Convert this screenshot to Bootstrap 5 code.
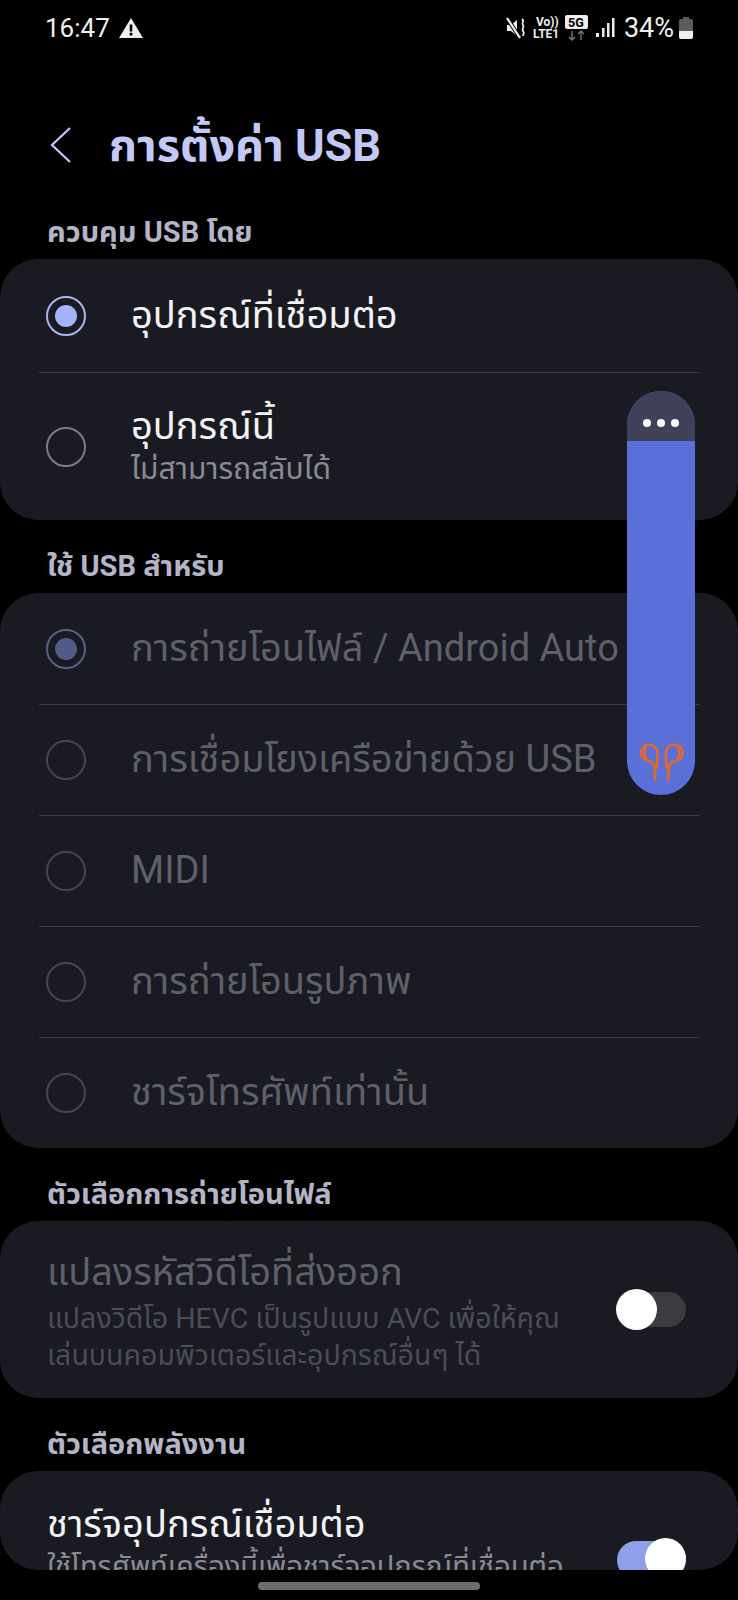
<!DOCTYPE html>
<html lang="th">
<head>
    <meta charset="UTF-8">
    <meta name="viewport" content="width=device-width, initial-scale=1.0">
    <title>การตั้งค่า USB</title>
    <link href="https://cdn.jsdelivr.net/npm/bootstrap@5.3.0/dist/css/bootstrap.min.css" rel="stylesheet">
    <style>
        html, body { background: #000; }
        body { font-family: Roboto, "Noto Sans", "Noto Sans Thai", sans-serif; color: #f2f2f4; }
        .screen { width: 738px; height: 1600px; overflow: hidden; position: relative; background: #000; }

        .status-row { height: 56px; padding: 0 44px 0 45px; font-size: 26px; color: #f0f0f0; }
        .status-pct { font-size: 27px; margin-left: 9px; }
        .status-gap { margin-left: 6px; }
        .app-bar { height: 154px; padding: 24px 0 0 48px; }
        .app-title { font-size: 45px; font-weight: 700; color: #c3c9f6; margin: 0 0 0 37px; line-height: 1; }

        .sec-label { height: 73px; padding: 0 47px 12px; font-size: 29px; font-weight: 700; color: #b4b5c6; line-height: 1; }
        .sec-first { height: 49px; }

        .panel-box { background: #191a22; border-radius: 38px; overflow: hidden; }
        .opt-row { height: 111px; }
        .opt-row + .opt-row { border-top: 1px solid #3b3c45; }
        .opt-tall { height: 148px; }
        .opt-first { height: 113px; }
        .opt-title { font-size: 38px; line-height: 1.1; color: #f3f3f5; }
        .opt-sub { font-size: 30px; line-height: 1.2; margin-top: 4px; color: #8a8b92; }
        .opt-dim .opt-title { color: #5f6068; }

        .rule-list { margin: 0 38px 0 39px; }
        .rule-list .opt-row { padding-left: 7px; }

        .radio-dot { width: 40px; height: 40px; border-radius: 50%; border: 2px solid #7c7d84; margin-right: 45px; flex: none; }
        .radio-dot.is-on { border-color: #aab5f0; }
        .radio-dot.is-on::after { content: ""; width: 22px; height: 22px; border-radius: 50%; background: #a4b3fc; }
        .opt-dim .radio-dot { border-color: #45464e; }
        .opt-dim .radio-dot.is-on { border-color: #5a6084; }
        .opt-dim .radio-dot.is-on::after { background: #525a88; }

        .toggle-box { height: 177px; padding: 0 52px 0 47px; }
        .toggle-text { padding-top: 7px; }
        .toggle-title { font-size: 38px; line-height: 1.1; color: #5f6068; }
        .toggle-sub { font-size: 28.5px; line-height: 37px; margin-top: 7px; color: #4c4d55; }
        .power-box { height: 99px; padding: 33px 52px 0 47px; }
        .power-box .toggle-title { color: #f3f3f5; }
        .power-box .toggle-sub { font-size: 29px; margin-top: 2px; color: #8a8b92; white-space: nowrap; }

        .switch-off { width: 69px; height: 35px; border-radius: 18px; background: #3b3c40; position: relative; flex: none; }
        .switch-off::after { content: ""; position: absolute; left: -1px; top: -3px; width: 41px; height: 41px; border-radius: 50%; background: #fff; }
        .switch-on { width: 69px; height: 38px; border-radius: 19px; background: #8f9fe9; position: absolute; right: 52px; top: 70px; }
        .switch-on::after { content: ""; position: absolute; right: 0; top: -3px; width: 41px; height: 41px; border-radius: 50%; background: #fff; }

        .edge-panel { position: absolute; left: 627px; top: 391px; width: 68px; height: 404px; border-radius: 34px; overflow: hidden; background: #5a70d8; }
        .edge-head { height: 50px; background: #3f4059; gap: 6px; padding-top: 28px; }
        .edge-head i { width: 8px; height: 8px; border-radius: 50%; background: #fff; }
        .edge-buds { position: absolute; left: 12px; top: 351px; }

        .home-pill { position: absolute; left: 258px; top: 1582px; width: 222px; height: 8px; border-radius: 4px; background: #6c6c6e; }
    </style>
</head>
<body>
    <div class="screen">
        <div class="status-row d-flex align-items-center justify-content-between">
            <div class="d-flex align-items-center gap-2">
                <span>16:47</span>
                <svg width="26" height="22" viewBox="0 0 26 22"><path d="M13 1 25 21H1Z" fill="#f0f0f0"/><path d="M11.7 7.5h2.6v7h-2.6zM11.7 15.8h2.6v2.6h-2.6z" fill="#000"/></svg>
            </div>
            <div class="d-flex align-items-center">
                <svg width="21" height="22" viewBox="0 0 21 22" fill="#eee"><path d="M1 8h4l6-5v16l-6-5H1z"/><path d="M1 1 14 21" stroke="#000" stroke-width="4"/><path d="M1 1 14 21" stroke="#eee" stroke-width="2.2"/><path d="M16 2c3 2-1 4 1 6s-2 4 0 6 0 3 0 5" stroke="#eee" stroke-width="1.8" fill="none"/></svg>
                <svg width="28" height="24" viewBox="0 0 28 24" fill="#eee" class="status-gap"><text x="3" y="10" font-family="Roboto" font-weight="700" font-size="12">Vo))</text><text x="0" y="22" font-family="Roboto" font-weight="700" font-size="12">LTE1</text></svg>
                <svg width="24" height="27" viewBox="0 0 24 27" class="ms-1"><rect x="0" y="0" width="23" height="14" rx="2" fill="#eee"/><text x="3" y="12" font-family="Roboto" font-weight="700" font-size="12.5" fill="#000">5G</text><path d="M7 16v9M4 22l3 3 3-3M16 25v-9M13 19l3-3 3 3" stroke="#777" stroke-width="1.4" fill="none"/></svg>
                <svg width="20" height="22" viewBox="0 0 20 22" fill="#eee" class="status-gap"><rect x="1" y="16" width="3" height="4"/><rect x="7" y="11" width="2.5" height="9"/><rect x="12" y="6" width="2.5" height="14"/><rect x="17" y="1" width="2.5" height="19"/></svg>
                <span class="status-pct">34%</span>
                <svg width="16" height="24" viewBox="0 0 16 24" class="ms-1"><path d="M5 1h6v2h2a2 2 0 0 1 2 2v16a2 2 0 0 1-2 2H3a2 2 0 0 1-2-2V5a2 2 0 0 1 2-2h2z" fill="#5c5c5c"/><path d="M1 15h14v6a2 2 0 0 1-2 2H3a2 2 0 0 1-2-2z" fill="#eee"/></svg>
            </div>
        </div>

        <div class="app-bar d-flex align-items-center">
            <svg width="24" height="38" viewBox="0 0 24 38"><path d="M22 2 4 19l18 17" fill="none" stroke="#c3c9f6" stroke-width="2.2"/></svg>
            <h1 class="app-title">การตั้งค่า USB</h1>
        </div>

        <div class="sec-label sec-first d-flex align-items-end">ควบคุม USB โดย</div>
        <div class="panel-box">
            <div class="rule-list">
                <div class="opt-row opt-first d-flex align-items-center">
                    <span class="radio-dot is-on d-flex align-items-center justify-content-center"></span>
                    <span class="opt-title">อุปกรณ์ที่เชื่อมต่อ</span>
                </div>
                <div class="opt-row opt-tall d-flex align-items-center">
                    <span class="radio-dot"></span>
                    <div>
                        <div class="opt-title">อุปกรณ์นี้</div>
                        <div class="opt-sub">ไม่สามารถสลับได้</div>
                    </div>
                </div>
            </div>
        </div>

        <div class="sec-label d-flex align-items-end">ใช้ USB สำหรับ</div>
        <div class="panel-box">
            <div class="rule-list opt-dim">
                <div class="opt-row d-flex align-items-center">
                    <span class="radio-dot is-on d-flex align-items-center justify-content-center"></span>
                    <span class="opt-title">การถ่ายโอนไฟล์ / Android Auto</span>
                </div>
                <div class="opt-row d-flex align-items-center">
                    <span class="radio-dot"></span>
                    <span class="opt-title">การเชื่อมโยงเครือข่ายด้วย USB</span>
                </div>
                <div class="opt-row d-flex align-items-center">
                    <span class="radio-dot"></span>
                    <span class="opt-title">MIDI</span>
                </div>
                <div class="opt-row d-flex align-items-center">
                    <span class="radio-dot"></span>
                    <span class="opt-title">การถ่ายโอนรูปภาพ</span>
                </div>
                <div class="opt-row d-flex align-items-center">
                    <span class="radio-dot"></span>
                    <span class="opt-title">ชาร์จโทรศัพท์เท่านั้น</span>
                </div>
            </div>
        </div>

        <div class="sec-label d-flex align-items-end">ตัวเลือกการถ่ายโอนไฟล์</div>
        <div class="panel-box toggle-box d-flex align-items-center justify-content-between">
            <div class="toggle-text">
                <div class="toggle-title">แปลงรหัสวิดีโอที่ส่งออก</div>
                <div class="toggle-sub">แปลงวิดีโอ HEVC เป็นรูปแบบ AVC เพื่อให้คุณ<br>เล่นบนคอมพิวเตอร์และอุปกรณ์อื่นๆ ได้</div>
            </div>
            <span class="switch-off"></span>
        </div>

        <div class="sec-label d-flex align-items-end">ตัวเลือกพลังงาน</div>
        <div class="panel-box power-box position-relative">
            <div class="toggle-title">ชาร์จอุปกรณ์เชื่อมต่อ</div>
            <div class="toggle-sub">ใช้โทรศัพท์เครื่องนี้เพื่อชาร์จอุปกรณ์ที่เชื่อมต่อ</div>
            <span class="switch-on"></span>
        </div>

        <div class="edge-panel">
            <div class="edge-head d-flex justify-content-center"><i></i><i></i><i></i></div>
            <svg class="edge-buds" width="47" height="42" viewBox="85 95 140 125" fill="none" stroke="#e0692e" stroke-width="8"><path d="M140 130C140 112 128 103 115 103 100 103 92 115 92 128 92 140 102 150 115 152 124 153 130 160 132 170L133 210"/><path d="M107 106C100 116 100 136 107 148"/><path d="M140 130C140 150 140 165 136 176"/><path d="M165 130C165 112 177 103 190 103 205 103 215 115 215 128 215 140 205 150 192 152 183 153 176 160 174 170L172 210"/><path d="M200 106C207 116 207 136 200 148"/><path d="M165 130C165 150 165 165 170 176"/></svg>
        </div>

        <div class="home-pill"></div>
    </div>
    <script src="https://cdn.jsdelivr.net/npm/bootstrap@5.3.0/dist/js/bootstrap.bundle.min.js"></script>
</body>
</html>
